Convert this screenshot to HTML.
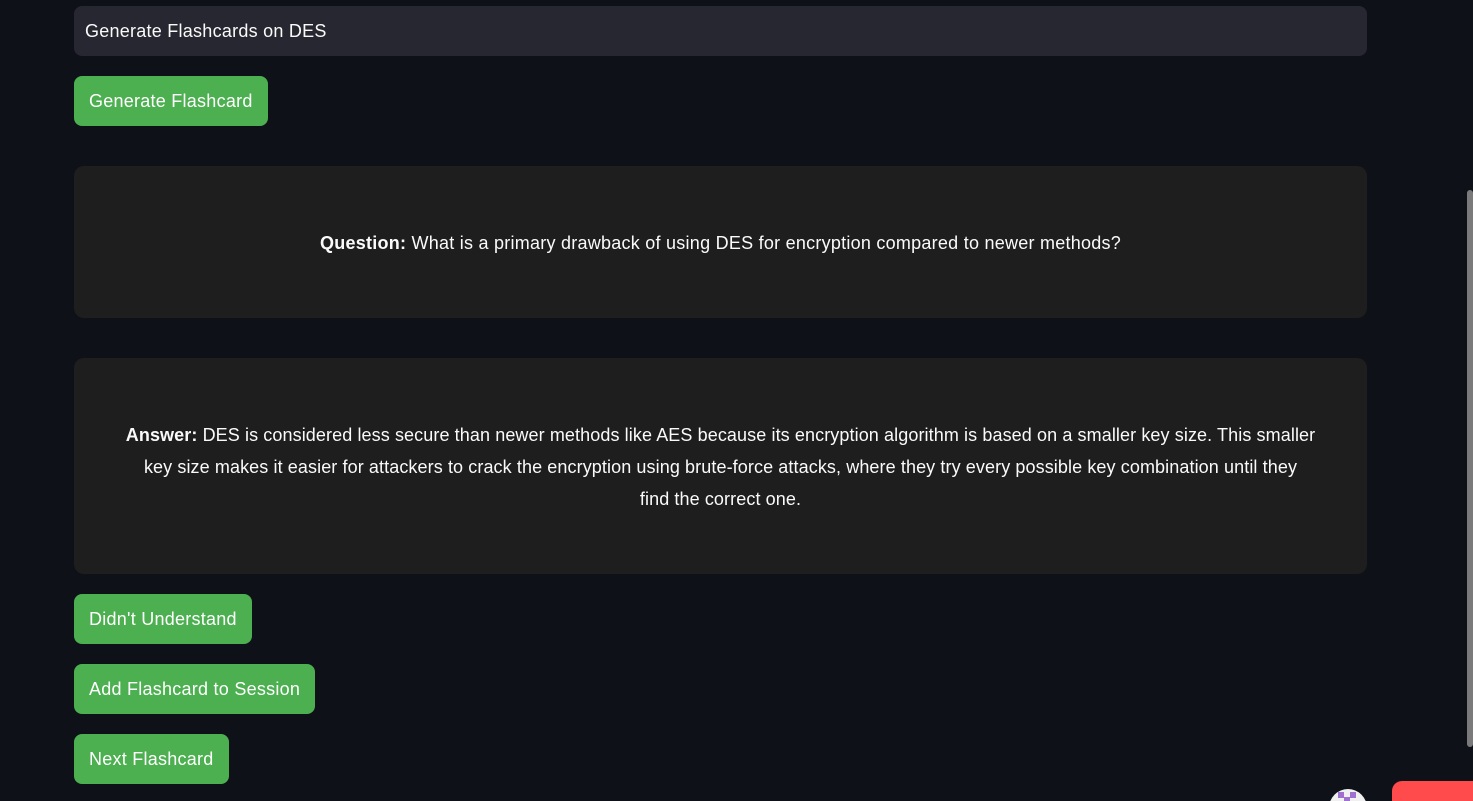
<html><head><style>
html,body{margin:0;width:1473px;height:801px;overflow:hidden}
body{background:#0e1117;position:relative;font-family:"Liberation Sans",sans-serif;color:#fafafa;font-size:18px;letter-spacing:0.25px}
.in{position:absolute;left:74px;top:6px;width:1293px;height:50px;background:#262730;border-radius:8px;box-sizing:border-box;padding-left:11px;line-height:51px}
.btn{position:absolute;left:74px;height:50px;background:#4caf50;border-radius:8px;padding:0 15px;line-height:51px;color:#fff}
.card{position:absolute;left:74px;width:1293px;background:#1e1e1e;border-radius:10px;display:flex;align-items:center;justify-content:center;text-align:center;box-sizing:border-box;padding:2px 10px 0;line-height:32px}
</style></head><body>
<div class="in">Generate Flashcards on DES</div>
<div class="btn" style="top:76px">Generate Flashcard</div>
<div class="card" style="top:166px;height:152px"><div><b>Question:</b> What is a primary drawback of using DES for encryption compared to newer methods?</div></div>
<div class="card" style="top:358px;height:216px"><div style="white-space:nowrap;letter-spacing:0.1px"><b>Answer:</b> DES is considered less secure than newer methods like AES because its encryption algorithm is based on a smaller key size. This smaller<br>key size makes it easier for attackers to crack the encryption using brute-force attacks, where they try every possible key combination until they<br>find the correct one.</div></div>
<div class="btn" style="top:594px">Didn't Understand</div>
<div class="btn" style="top:664px">Add Flashcard to Session</div>
<div class="btn" style="top:734px">Next Flashcard</div>
<div style="position:absolute;left:1467px;top:190px;width:6px;height:557px;background:#7a7a7a;border-radius:3px"></div>
<div style="position:absolute;left:1329px;top:789px;width:38px;height:38px;border-radius:50%;background:#f0f0f0;overflow:hidden">
<div style="position:absolute;left:9px;top:3px;width:6px;height:6px;background:#a070d0"></div>
<div style="position:absolute;left:21px;top:3px;width:6px;height:6px;background:#a070d0"></div>
<div style="position:absolute;left:15px;top:8px;width:6px;height:4px;background:#a070d0"></div>
</div>
<div style="position:absolute;left:1392px;top:781px;width:100px;height:40px;border-radius:10px;background:#ff4b4b"></div>
</body></html>
